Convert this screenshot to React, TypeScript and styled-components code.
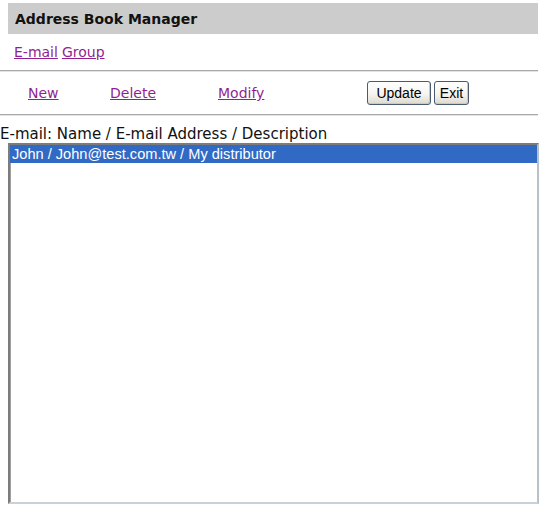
import React, { useState } from 'react';
import styled, { createGlobalStyle } from 'styled-components';

const GlobalStyle = createGlobalStyle`
  html, body {
    margin: 0;
    padding: 0;
    background: #ffffff;
  }
  body {
    font-family: "DejaVu Sans", Verdana, sans-serif;
    color: #000;
  }
`;

const Page = styled.div`
  width: 542px;
  display: flex;
  flex-direction: column;
`;

const TitleBar = styled.div`
  margin: 3px 4px 0 8px;
  height: 31px;
  padding-left: 7px;
  display: flex;
  align-items: center;
  background: #cccccc;
  font-size: 14px;
  font-weight: bold;
  color: #111;
`;

const TabRow = styled.div`
  height: 36px;
  padding-left: 14px;
  display: flex;
  align-items: center;
  gap: 4px;
  font-size: 14px;
`;

const Link = styled.a`
  color: #921f92;
  text-decoration: underline;
  cursor: pointer;
`;

const Rule = styled.div`
  width: 538px;
  height: 1px;
  background: #a8a8a8;
  border-bottom: 1px solid #e4e4e4;
`;

const ActionRow = styled.div`
  height: 42px;
  padding-left: 28px;
  display: grid;
  grid-template-columns: 82px 108px 149px auto;
  align-items: center;
  font-size: 14px;
`;

const ButtonGroup = styled.div`
  display: flex;
  gap: 3px;
`;

const Button = styled.button<{ $w: number }>`
  width: ${p => p.$w}px;
  height: 24px;
  padding: 0;
  font-family: "Liberation Sans", Arial, sans-serif;
  font-size: 14px;
  color: #000;
  border: 1px solid #4a5a70;
  border-radius: 3px;
  background: linear-gradient(#ffffff 0%, #f6f5f0 55%, #dcd9ce 100%);
  box-shadow: inset -1px -1px 0 #cdc9bb;
`;

const Label = styled.div`
  margin-top: 9px;
  font-size: 15px;
  line-height: 18px;
  color: #111;
`;

const ListBox = styled.div`
  margin-left: 8px;
  width: 531px;
  height: 361px;
  box-sizing: border-box;
  border-style: solid;
  border-width: 2px;
  border-color: #7c7c7c #b8c0c8 #c8d0d8 #7c7c7c;
  box-shadow: inset 1px 1px 0 #a0a0a0;
  background: #fff;
  padding: 0;
  overflow: hidden;
`;

const Option = styled.div<{ $selected: boolean }>`
  height: 18px;
  line-height: 18px;
  padding-left: 2px;
  font-family: "Liberation Sans", Arial, sans-serif;
  font-size: 14.6px;
  white-space: nowrap;
  background: ${p => (p.$selected ? '#316ac5' : 'transparent')};
  color: ${p => (p.$selected ? '#ffffff' : '#000000')};
`;

const entries = ['John / John@test.com.tw / My distributor'];

export default function App() {
  const [selected, setSelected] = useState(0);

  return (
    <Page>
      <GlobalStyle />
      <TitleBar>Address Book Manager</TitleBar>
      <TabRow>
        <Link>E-mail</Link>
        <Link>Group</Link>
      </TabRow>
      <Rule />
      <ActionRow>
        <Link>New</Link>
        <Link>Delete</Link>
        <Link>Modify</Link>
        <ButtonGroup>
          <Button $w={64}>Update</Button>
          <Button $w={35}>Exit</Button>
        </ButtonGroup>
      </ActionRow>
      <Rule />
      <Label>E-mail: Name / E-mail Address / Description</Label>
      <ListBox>
        {entries.map((e, i) => (
          <Option key={i} $selected={selected === i} onClick={() => setSelected(i)}>
            {e}
          </Option>
        ))}
      </ListBox>
    </Page>
  );
}
